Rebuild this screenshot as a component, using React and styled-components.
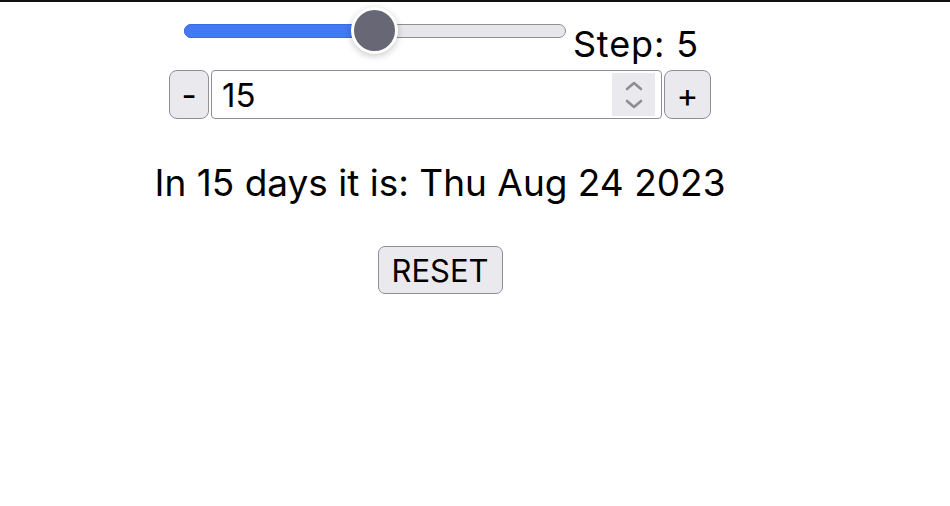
import React, { useState } from "react";
import styled, { createGlobalStyle } from "styled-components";

const Global = createGlobalStyle`
  html, body { margin: 0; padding: 0; background: #fff; }
  body { font-family: Inter, "Liberation Sans", sans-serif; color: #000; }
  * { box-sizing: border-box; }
`;

const TopBar = styled.div`
  height: 2px;
  background: #111;
`;

const Page = styled.div`
  width: 880px;
  display: flex;
  flex-direction: column;
  align-items: center;
  padding-top: 5px;
`;

const SliderRow = styled.div`
  display: flex;
  align-items: flex-start;
  gap: 7px;
  height: 63px;
  margin-left: 3px;
`;

const SliderBox = styled.div`
  position: relative;
  width: 382px;
  height: 48px;
  display: flex;
  align-items: center;
`;

const Track = styled.div`
  position: relative;
  width: 100%;
  height: 14px;
  border-radius: 7px;
  background: #e6e6eb;
  border: 1px solid #8e8e93;
`;

const Fill = styled.div`
  position: absolute;
  left: -1px;
  top: -1px;
  bottom: -1px;
  border-radius: 7px;
  background: #4479f6;
  border: 1px solid #3a6de3;
`;

const Thumb = styled.div`
  position: absolute;
  top: 0;
  width: 47px;
  height: 47px;
  border-radius: 50%;
  background: #676775;
  border: 3.5px solid #fff;
  box-shadow: 0 2px 7px rgba(0, 0, 0, 0.22);
`;

const StepLabel = styled.span`
  font-size: 36px;
  line-height: 36px;
  letter-spacing: 0.9px;
  margin-top: 19px;
  white-space: nowrap;
`;

const InputRow = styled.div`
  display: flex;
  gap: 2px;
  height: 49px;
`;

const SmallButton = styled.button`
  width: ${(p) => p.$w}px;
  height: 49px;
  padding: 0;
  border: 1px solid #8e8e99;
  border-radius: 8px;
  background: #e9e9ee;
  font-family: Inter, "Liberation Sans", sans-serif;
  font-size: 33px;
  color: #000;
  display: flex;
  align-items: center;
  justify-content: center;
`;

const NumberField = styled.div`
  width: 451px;
  height: 49px;
  border: 1px solid #8e8e99;
  border-radius: 4px;
  background: #fff;
  display: flex;
  align-items: center;
  padding: 0 6px 0 10px;
`;

const NumberInput = styled.input`
  flex: 1;
  min-width: 0;
  border: none;
  outline: none;
  background: transparent;
  font-family: Inter, "Liberation Sans", sans-serif;
  font-size: 33px;
  color: #000;
  padding: 0;
  appearance: textfield;
  &::-webkit-inner-spin-button,
  &::-webkit-outer-spin-button {
    -webkit-appearance: none;
    margin: 0;
  }
`;

const Spinner = styled.span`
  width: 43px;
  height: 43px;
  background: #e9e9ee;
  display: flex;
  align-items: center;
  justify-content: center;
`;

const DateText = styled.p`
  margin: 40px 0 0;
  font-size: 37px;
  line-height: 48px;
  white-space: nowrap;
`;

const ResetButton = styled.button`
  margin-top: 39px;
  width: 125px;
  height: 48px;
  padding: 0;
  border: 1px solid #8e8e99;
  border-radius: 7px;
  background: #e9e9ee;
  font-family: Inter, "Liberation Sans", sans-serif;
  font-size: 31px;
  color: #000;
`;

const MIN = 0;
const MAX = 30;
const STEP = 5;
const BASE = new Date(2023, 7, 9);

export default function App() {
  const [days, setDays] = useState(15);
  const frac = (days - MIN) / (MAX - MIN);
  const thumbLeft = frac * (382 - 47);
  const fillWidth = thumbLeft + 23.5 + 1;
  const d = new Date(BASE);
  d.setDate(d.getDate() + days);

  return (
    <>
      <Global />
      <TopBar />
      <Page>
        <SliderRow>
          <SliderBox>
            <Track>
              <Fill style={{ width: fillWidth }} />
            </Track>
            <Thumb style={{ left: thumbLeft }} />
          </SliderBox>
          <StepLabel>Step: {STEP}</StepLabel>
        </SliderRow>
        <InputRow>
          <SmallButton $w={40} onClick={() => setDays((v) => v - STEP)}>-</SmallButton>
          <NumberField>
            <NumberInput
              type="number"
              value={days}
              onChange={(e) => setDays(Number(e.target.value) || 0)}
            />
            <Spinner>
              <svg width="18" height="30" viewBox="0 0 18 30" fill="none" stroke="#8e8e93" strokeWidth="2.6" strokeLinecap="round" strokeLinejoin="round">
                <path d="M2 9 L9 3 L16 9" />
                <path d="M2 21 L9 27 L16 21" />
              </svg>
            </Spinner>
          </NumberField>
          <SmallButton $w={47} onClick={() => setDays((v) => v + STEP)}>+</SmallButton>
        </InputRow>
        <DateText>In {days} days it is: {d.toDateString()}</DateText>
        <ResetButton onClick={() => setDays(15)}>RESET</ResetButton>
      </Page>
    </>
  );
}
